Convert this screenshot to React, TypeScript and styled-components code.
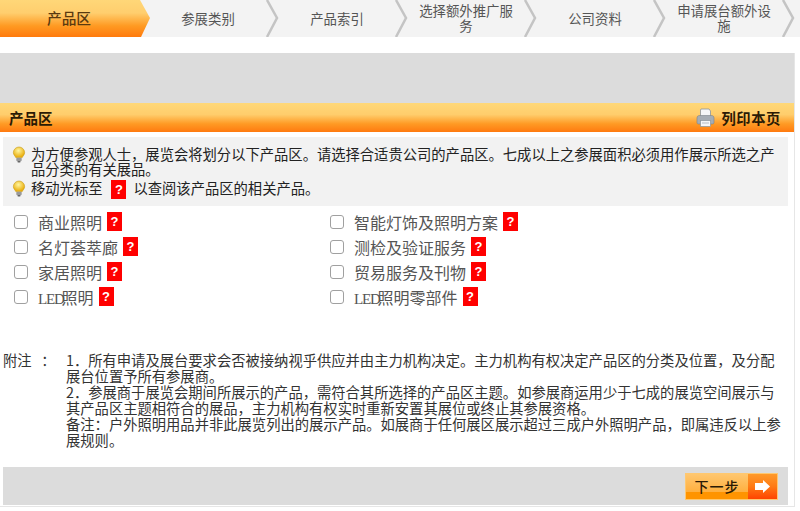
import React from "react";
import styled, { createGlobalStyle } from "styled-components";

const Global = createGlobalStyle`
  html, body { margin: 0; padding: 0; background: #fff; overflow: hidden; }
  body { font-family: "Liberation Serif", "Noto Sans CJK SC", serif; color: #222; }
`;

const Page = styled.div`
  width: 800px;
  height: 511px;
  display: flex;
  flex-direction: column;
  overflow: hidden;
`;

const Nav = styled.nav`
  display: flex;
  height: 37px;
  background: #f3f3f3;
  flex: none;
`;

const NavItem = styled.div<{ $active?: boolean }>`
  position: relative;
  flex: none;
  width: ${(p) => (p.$active ? "150px" : "129px")};
  box-sizing: border-box;
  padding: ${(p) => (p.$active ? "0 12px 2px 0" : "0 13px 1px 0")};
  display: flex;
  align-items: center;
  justify-content: center;
  text-align: center;
  font-family: "Noto Sans CJK SC", sans-serif;
  font-size: ${(p) => (p.$active ? "14.7px" : "13.4px")};
  line-height: 15px;
  font-weight: ${(p) => (p.$active ? 500 : 400)};
  color: ${(p) => (p.$active ? "#5a3a10" : "#555")};
  background: ${(p) =>
    p.$active
      ? "linear-gradient(#ffd778 0%, #ffce6e 35%, #ff9a22 70%, #ff7a0c 100%)"
      : "transparent"};
  clip-path: ${(p) =>
    p.$active ? "polygon(0 0, 140px 0, 150px 18px, 141px 37px, 0 37px)" : "none"};
`;

const NavLabel = styled.span`
  display: block;
  max-width: 96px;
`;

const Chevron = styled.svg`
  position: absolute;
  right: -1px;
  top: 0;
  width: 14px;
  height: 37px;
`;

const Main = styled.main`
  margin-top: 16px;
  width: 795px;
  height: 454px;
  box-sizing: border-box;
  border-right: 1px solid #e6e6e6;
  border-bottom: 1px solid #e6e6e6;
  display: flex;
  flex-direction: column;
`;

const Banner = styled.div`
  height: 50px;
  background: #dcdcdc;
  flex: none;
`;

const Header = styled.header`
  height: 29px;
  flex: none;
  display: flex;
  align-items: center;
  justify-content: space-between;
  padding: 0 13px 0 9px;
  background: linear-gradient(#ffd878 0%, #ffcd6c 40%, #ff9a24 72%, #ff7a10 100%);
  font-family: "Noto Sans CJK SC", sans-serif;
  font-size: 14.5px;
  font-weight: 700;
  color: #2b1a05;
`;

const PrintLink = styled.div`
  display: flex;
  align-items: center;
  gap: 6px;
  letter-spacing: 0.6px;
  font-size: 14.3px;
`;

const InfoBox = styled.section`
  margin: 5px 6px 0 3px;
  height: 69px;
  box-sizing: border-box;
  padding: 9px 10px 0 9px;
  background: #f2f2f2;
  font-family: "Noto Sans CJK SC", sans-serif;
  font-size: 14.3px;
  line-height: 15px;
  color: #222;
`;

const InfoLine = styled.div`
  display: flex;
  align-items: flex-start;
  padding-bottom: 4px;
`;

const Bulb = styled.svg`
  flex: none;
  width: 14px;
  height: 17px;
  margin: 0 5px 0 0;
`;

const Gap = styled.span<{ $w: number }>`
  display: inline-block;
  width: ${(p) => p.$w}px;
`;

const Help = styled.span`
  display: inline-flex;
  align-items: center;
  justify-content: center;
  width: 15px;
  height: 19px;
  background: #f00;
  color: #fff;
  font-family: "Liberation Sans", sans-serif;
  font-size: 13px;
  font-weight: 700;
  line-height: 1;
  vertical-align: middle;
  flex: none;
`;

const Options = styled.div`
  display: grid;
  grid-template-columns: 316px 316px;
  grid-auto-rows: 25px;
  padding: 3px 0 0 14px;
`;

const Option = styled.label`
  display: flex;
  align-items: center;
  font-size: 16px;
  color: #555;
  height: 25px;
`;

const Check = styled.input`
  appearance: none;
  width: 14px;
  height: 14px;
  margin: 0 10px 0 0;
  box-sizing: border-box;
  border: 1.5px solid #a0a0a0;
  border-radius: 3px;
  background: #fff;
`;

const OptionText = styled.span`
  font-family: "Noto Sans CJK SC", sans-serif;
  margin-right: 5px;
`;

const Latin = styled.span`
  font-family: "Liberation Serif", serif;
  font-size: 15px;
  letter-spacing: -1.2px;
  margin-right: -2px;
`;

const Notes = styled.section`
  display: flex;
  margin: 43px 0 0 3px;
  font-family: "Noto Sans CJK SC", sans-serif;
  font-size: 14.3px;
  line-height: 16px;
  color: #333;
`;

const NotesLabel = styled.div`
  flex: none;
  width: 63px;
`;

const NotesBody = styled.div`
  flex: none;
  width: 718px;
`;

const Footer = styled.footer`
  margin: 19px 6px 0 3px;
  height: 38px;
  flex: none;
  background: #dcdcdc;
  display: flex;
  align-items: center;
  justify-content: flex-end;
  padding-right: 10px;
`;

const NextButton = styled.button`
  display: flex;
  width: 93px;
  height: 27px;
  padding: 0;
  border: 1px solid #ffc870;
  background: none;
  font-family: "Noto Sans CJK SC", sans-serif;
  font-size: 14px;
  font-weight: 500;
  color: #2b1a05;
`;

const NextLabel = styled.span`
  flex: 1;
  height: 100%;
  display: flex;
  align-items: center;
  justify-content: center;
  letter-spacing: 1px;
  background: linear-gradient(#ffc770 0%, #ffb040 70%, #ff9400 70%, #ff9400 100%);
`;

const NextArrow = styled.span`
  width: 29px;
  height: 100%;
  display: flex;
  align-items: center;
  justify-content: center;
  background: linear-gradient(#ff9a2a 0%, #ff7a14 50%, #ff4400 100%);
`;

const navItems = ["参展类别", "产品索引", "选择额外推广服务", "公司资料", "申请展台额外设施"];

const options: [React.ReactNode, string][] = [
  ["商业照明", "a"],
  ["智能灯饰及照明方案", "b"],
  ["名灯荟萃廊", "c"],
  ["测检及验证服务", "d"],
  ["家居照明", "e"],
  ["贸易服务及刊物", "f"],
  [<><Latin>LED</Latin>照明</>, "g"],
  [<><Latin>LED</Latin>照明零部件</>, "h"],
];

const BulbIcon = () => (
  <Bulb viewBox="0 0 14 17">
    <defs>
      <radialGradient id="b" cx="45%" cy="35%" r="65%">
        <stop offset="0" stopColor="#fff6a0" />
        <stop offset="1" stopColor="#e8a800" />
      </radialGradient>
    </defs>
    <path d="M7 1a5.6 5.6 0 0 0-5.6 5.6c0 2.2 1.6 3.2 2.4 5h6.4c.8-1.8 2.4-2.8 2.4-5A5.6 5.6 0 0 0 7 1z" fill="url(#b)" stroke="#c79a10" strokeWidth=".6" />
    <rect x="4.3" y="11.8" width="5.4" height="3.4" rx="1" fill="#9a9a9a" />
    <rect x="5.5" y="15" width="3" height="1.4" rx=".6" fill="#666" />
  </Bulb>
);

const PrinterIcon = () => (
  <svg width="19" height="20" viewBox="0 0 19 20">
    <path d="M5 1h8l1.5 2v6h-10V2z" fill="#f4f6f8" stroke="#8b949c" strokeWidth=".8" />
    <path d="M1 10c0-1.5 1-2.500 2.500-2.500h12c1.500 0 2.500 1 2.500 2.500v4.500c0 1-.8 1.500-1.500 1.500h-14C1.800 16 1 15.500 1 14.500z" fill="#a5adb5" stroke="#78818a" strokeWidth=".6" />
    <rect x="4.500" y="12.500" width="10" height="6" fill="#f4f6f8" stroke="#8b949c" strokeWidth=".7" />
    <rect x="6" y="14.500" width="7" height="1" fill="#b5bcc3" />
  </svg>
);

export default function App() {
  return (
    <Page>
      <Global />
      <Nav>
        <NavItem $active>产品区</NavItem>
        {navItems.map((t) => (
          <NavItem key={t}>
            <NavLabel>{t}</NavLabel>
            <Chevron viewBox="0 0 14 37">
              <path d="M1 0 L11 18 L1 37" fill="none" stroke="#c4c4c4" strokeWidth="2.500" />
            </Chevron>
          </NavItem>
        ))}
      </Nav>
      <Main>
        <Banner />
        <Header>
          <span>产品区</span>
          <PrintLink>
            <PrinterIcon />
            列印本页
          </PrintLink>
        </Header>
        <InfoBox>
          <InfoLine>
            <BulbIcon />
            <span>为方便参观人士，展览会将划分以下产品区。请选择合适贵公司的产品区。七成以上之参展面积必须用作展示所选之产品分类的有关展品。</span>
          </InfoLine>
          <InfoLine>
            <BulbIcon />
            <span>移动光标至</span>
            <Gap $w={9} />
            <Help>?</Help>
            <Gap $w={7} />
            <span>以查阅该产品区的相关产品。</span>
          </InfoLine>
        </InfoBox>
        <Options>
          {options.map(([t, k]) => (
            <Option key={k}>
              <Check type="checkbox" />
              <OptionText>{t}</OptionText>
              <Help>?</Help>
            </Option>
          ))}
        </Options>
        <Notes>
          <NotesLabel>附注{"\u00a0\u00a0\u00a0"}：</NotesLabel>
          <NotesBody>
            <div>1．所有申请及展台要求会否被接纳视乎供应并由主力机构决定。主力机构有权决定产品区的分类及位置，及分配展台位置予所有参展商。</div>
            <div>2．参展商于展览会期间所展示的产品，需符合其所选择的产品区主题。如参展商运用少于七成的展览空间展示与其产品区主题相符合的展品，主力机构有权实时重新安置其展位或终止其参展资格。</div>
            <div>备注：户外照明用品并非此展览列出的展示产品。如展商于任何展区展示超过三成户外照明产品，即属违反以上参展规则。</div>
          </NotesBody>
        </Notes>
        <Footer>
          <NextButton>
            <NextLabel>下一步</NextLabel>
            <NextArrow>
              <svg width="15" height="13" viewBox="0 0 15 13">
                <path d="M0 3h8V0l7 6.500-7 6.500v-3H0z" fill="#fff" />
              </svg>
            </NextArrow>
          </NextButton>
        </Footer>
      </Main>
    </Page>
  );
}
